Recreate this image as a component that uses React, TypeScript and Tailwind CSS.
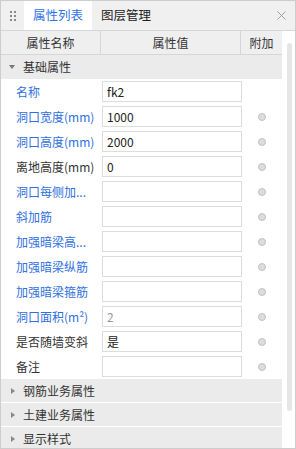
import { X } from "lucide-react";

type Row = { label: string; value?: string; blue: boolean; dot: boolean; muted?: boolean };

const rows: Row[] = [
  { label: "名称", value: "fk2", blue: true, dot: false },
  { label: "洞口宽度(mm)", value: "1000", blue: true, dot: true },
  { label: "洞口高度(mm)", value: "2000", blue: true, dot: true },
  { label: "离地高度(mm)", value: "0", blue: false, dot: true },
  { label: "洞口每侧加...", blue: true, dot: true },
  { label: "斜加筋", blue: true, dot: true },
  { label: "加强暗梁高...", blue: true, dot: true },
  { label: "加强暗梁纵筋", blue: true, dot: true },
  { label: "加强暗梁箍筋", blue: true, dot: true },
  { label: "洞口面积(m²)", value: "2", blue: true, dot: true, muted: true },
  { label: "是否随墙变斜", value: "是", blue: false, dot: true },
  { label: "备注", blue: false, dot: true },
];

const groups = ["钢筋业务属性", "土建业务属性", "显示样式"];

function Grip() {
  return (
    <div className="grid grid-cols-2 gap-x-[2px] gap-y-[2px] w-[6px]">
      {[0, 1, 2, 3, 4, 5].map((i) => (
        <span key={i} className="w-[2px] h-[2px] bg-[#8a8a8a]" />
      ))}
    </div>
  );
}

export default function App() {
  return (
    <div
      className="w-[296px] h-[449px] border border-[#cdcdcd] bg-white flex flex-col overflow-hidden text-[12px] text-[#333]"
      style={{ fontFamily: '"Noto Sans CJK SC", "Noto Sans", sans-serif' }}
    >
      {/* tab bar */}
      <div className="h-[29px] bg-[#f0f0f0] flex items-stretch shrink-0 text-[12.5px]">
        <div className="w-[23px] flex items-center justify-center pl-[1px]">
          <Grip />
        </div>
        <div className="w-[68px] bg-white flex items-center justify-center text-[#2f74e6]">属性列表</div>
        <div className="w-[68px] flex items-center justify-center text-[#222]">图层管理</div>
        <div className="flex-1" />
        <div className="w-[28px] flex items-center justify-center text-[#9a9a9a]">
          <X size={15} strokeWidth={1.5} />
        </div>
      </div>

      <div className="flex-1 flex border-t border-[#d6d6d6] min-h-0">
        <div className="w-[281px] flex flex-col">
          {/* header */}
          <div className="h-[24px] bg-[#efefef] border-b border-[#d6d6d6] flex shrink-0">
            <div className="w-[100px] border-r border-[#d6d6d6] flex items-center justify-center">属性名称</div>
            <div className="w-[140px] border-r border-[#d6d6d6] flex items-center justify-center">属性值</div>
            <div className="flex-1 flex items-center justify-center">附加</div>
          </div>

          {/* group */}
          <div className="h-[24px] bg-[#ebebeb] flex items-center pl-[8px] shrink-0">
            <span className="w-0 h-0 border-l-[3px] border-r-[3px] border-t-[4px] border-l-transparent border-r-transparent border-t-[#777] mr-[8px]" />
            <span>基础属性</span>
          </div>

          {rows.map((r) => (
            <div key={r.label} className="h-[25px] flex items-center shrink-0">
              <div className={`w-[101px] pl-[15px] whitespace-nowrap ${r.blue ? "text-[#2f6fe0]" : "text-[#333]"}`}>
                {r.label}
              </div>
              <div className="w-[140px] h-[21px] border border-[#dcdcdc] flex items-center px-[4px]">
                <span className={r.muted ? "text-[#999]" : "text-[#222]"}>{r.value ?? ""}</span>
              </div>
              <div className="flex-1 flex items-center justify-center pr-[1px]">
                {r.dot && <span className="w-[8px] h-[8px] rounded-full bg-[#dcdcdc] border border-[#c2c2c2]" />}
              </div>
            </div>
          ))}

          {groups.map((g) => (
            <div key={g} className="h-[24px] bg-[#ebebeb] border-b border-white flex items-center pl-[10px] shrink-0">
              <span className="w-0 h-0 border-t-[3px] border-b-[3px] border-l-[4px] border-t-transparent border-b-transparent border-l-[#888] mr-[8px]" />
              <span>{g}</span>
            </div>
          ))}
        </div>

        {/* scrollbar */}
        <div className="flex-1 flex justify-center pt-[12px] pl-[1px]">
          <div className="w-[5px] h-[368px] bg-[#e6e6e6] rounded-full" />
        </div>
      </div>
    </div>
  );
}
